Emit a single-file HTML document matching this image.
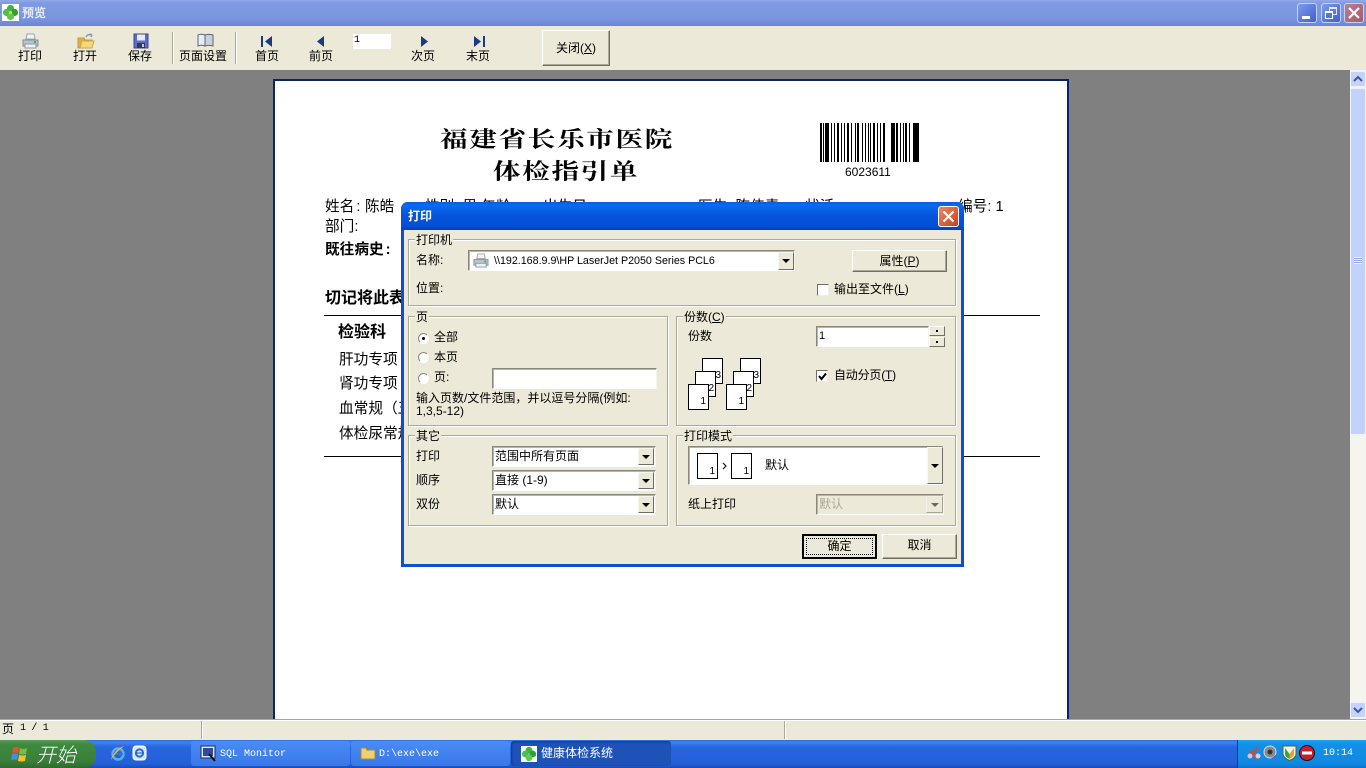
<!DOCTYPE html>
<html><head><meta charset="utf-8"><style>
html,body{margin:0;padding:0;width:1366px;height:768px;overflow:hidden;background:#808080}
*{box-sizing:border-box}
body{position:relative;font-family:"Liberation Sans","WenQuanYi Zen Hei","Noto Sans CJK SC",sans-serif;font-size:12px;color:#000}
.a{position:absolute}
.t{position:absolute;white-space:nowrap;line-height:14px;font-size:12px}
.d{font-size:14.67px;line-height:18px}
.b{font-weight:bold}
.g{position:absolute;border:1px solid #aca899;box-shadow:inset 1px 1px 0 #fff,1px 1px 0 #fff}
.lab{position:absolute;top:-7px;left:6px;background:#ece9d8;padding:0 1px;line-height:14px;white-space:nowrap}
.in{position:absolute;background:#fff;border:1px solid;border-color:#8a8778 #f4f3ee #fff #8a8778;box-shadow:inset 1px 1px 0 #b8b5a6}
.ar{position:absolute;background:#ece9d8;border:1px solid;border-color:#f8f7f2 #716f64 #716f64 #f8f7f2}
.ar:after{content:"";position:absolute;left:50%;top:50%;margin:-2px 0 0 -4px;border:4px solid transparent;border-top:4px solid #000;border-bottom:0}
.btn{position:absolute;background:#ece9d8;border:1px solid;border-color:#fff #716f64 #716f64 #fff;box-shadow:inset -1px -1px 0 #aca899;text-align:center;white-space:nowrap}
.rd{position:absolute;width:11px;height:11px;border-radius:50%;background:#fff;border:1px solid;border-color:#8a8778 #fff #fff #8a8778}
.ck{position:absolute;width:12px;height:12px;background:#fff;border:1px solid;border-color:#716f64 #eee #eee #716f64}
.pg{position:absolute;width:21px;height:26px;background:#fff;border:1px solid #000;font-size:10px;line-height:10px;text-align:right;padding:12px 1px 0 0}
.wb{position:absolute;top:3px;width:20px;height:20px;border-radius:3px;border:1px solid #c5d2f5;background:linear-gradient(135deg,#7f9cea,#3f5fd0)}
.tk{position:absolute;top:741px;height:25px;border-radius:3px;background:linear-gradient(#4a8bf5,#3a78ea);color:#fff;line-height:25px;white-space:nowrap}
.ttl{position:absolute;white-space:nowrap;font-size:22px;line-height:28px;font-family:'Noto Serif CJK SC',serif;letter-spacing:1.4px;font-weight:700;transform:scaleX(1.25);transform-origin:0 0}
</style></head><body>

<!-- title bar -->
<div class="a" style="left:0;top:0;width:1366px;height:26px;background:linear-gradient(#92aae8 0,#7e9ae2 12%,#7a96e0 70%,#6c84d6 100%)"></div>
<svg class="a" style="left:2px;top:4px" width="17" height="17" viewBox="0 0 17 17"><rect width="17" height="17" fill="#fff"/><circle cx="8.5" cy="4.5" r="3.6" fill="#3fb53f"/><circle cx="4.5" cy="8.5" r="3.6" fill="#4cc04c"/><circle cx="12.5" cy="8.5" r="3.6" fill="#2f9e3a"/><circle cx="8.5" cy="12.5" r="3.6" fill="#5fc94f"/><circle cx="8.5" cy="8.5" r="1.6" fill="#e8d040"/></svg>
<div class="t" style="left:22px;top:6px;color:#e6ecfa;font-weight:bold">预览</div>
<div class="wb" style="left:1297px"><div class="a" style="left:4px;top:12px;width:8px;height:3px;background:#fff"></div></div>
<div class="wb" style="left:1321px"><div class="a" style="left:7px;top:3px;width:8px;height:8px;border:1px solid #dfe6fa;border-top-width:2px"></div><div class="a" style="left:3px;top:7px;width:8px;height:8px;border:1px solid #fff;border-top-width:2px;background:#5474da"></div></div>
<div class="wb" style="left:1344px;background:linear-gradient(135deg,#b88090,#a55a6c)"><svg class="a" style="left:2px;top:2px" width="14" height="14"><path d="M2 2L12 12M12 2L2 12" stroke="#fff" stroke-width="2.2"/></svg></div>

<!-- toolbar -->
<div class="a" style="left:0;top:26px;width:1366px;height:44px;background:#ece9d8"></div>
<svg class="a" style="left:22px;top:33px" width="17" height="16" viewBox="0 0 17 16"><path d="M5 1h7l1 5H4z" fill="#f4f4f4" stroke="#9aa6b2"/><path d="M1 7h15v6H1z" fill="#b8c4d0" stroke="#7f8e9e"/><path d="M3 11h11v4H3z" fill="#eef1f4" stroke="#8b97a4"/><rect x="12" y="8" width="2" height="2" fill="#3db03d"/></svg>
<svg class="a" style="left:77px;top:33px" width="18" height="16" viewBox="0 0 18 16"><path d="M1 5h6l1 2h7v8H1z" fill="#e0b040" stroke="#c09a40"/><path d="M3 15L5 8h12l-2 7z" fill="#f6d878" stroke="#c8a850"/><path d="M9 4C10 2 12 1 15 2M15 2l-2-1M15 2l-1 2" fill="none" stroke="#7f93a8" stroke-width="1.3"/></svg>
<svg class="a" style="left:133px;top:33px" width="16" height="16" viewBox="0 0 16 16"><path d="M1 1h14v14H1z" fill="#5a6ec8" stroke="#3a4690"/><rect x="4" y="1.5" width="8" height="6" fill="#e8ecf6"/><rect x="4" y="10" width="8" height="5" fill="#30385c"/><rect x="9" y="11" width="2" height="3" fill="#c0c8d8"/></svg>
<svg class="a" style="left:197px;top:33px" width="17" height="15" viewBox="0 0 17 15"><path d="M1 2c2-1 4-1 7 0v11c-3-1-5-1-7 0z" fill="#e8edf2" stroke="#5a6672"/><path d="M8 2c3-1 5-1 8 0v11c-3-1-5-1-8 0z" fill="#c8d2dc" stroke="#5a6672"/></svg>
<div class="a" style="left:172px;top:32px;width:2px;height:32px;background:linear-gradient(90deg,#aca899 50%,#fff 50%)"></div>
<div class="a" style="left:235px;top:32px;width:2px;height:32px;background:linear-gradient(90deg,#aca899 50%,#fff 50%)"></div>
<svg class="a" style="left:261px;top:36px" width="12" height="11"><rect x="0" y="0" width="2" height="11" fill="#1f3a7a"/><path d="M11 0v11L4 5.5z" fill="#1f3a7a"/></svg>
<svg class="a" style="left:317px;top:36px" width="7" height="11"><path d="M7 0v11L0 5.5z" fill="#1f3a7a"/></svg>
<svg class="a" style="left:421px;top:36px" width="7" height="11"><path d="M0 0v11L7 5.5z" fill="#1f3a7a"/></svg>
<svg class="a" style="left:473px;top:36px" width="12" height="11"><rect x="10" y="0" width="2" height="11" fill="#1f3a7a"/><path d="M1 0v11L8 5.5z" fill="#1f3a7a"/></svg>
<div class="a" style="left:353px;top:34px;width:38px;height:15px;background:#fff"></div>
<div class="t" style="left:354px;top:34px;font-size:10px;font-family:'Liberation Mono',monospace">1</div>
<div class="t" style="left:18px;top:49px">打印</div>
<div class="t" style="left:73px;top:49px">打开</div>
<div class="t" style="left:128px;top:49px">保存</div>
<div class="t" style="left:179px;top:49px">页面设置</div>
<div class="t" style="left:255px;top:49px">首页</div>
<div class="t" style="left:309px;top:49px">前页</div>
<div class="t" style="left:411px;top:49px">次页</div>
<div class="t" style="left:466px;top:49px">末页</div>
<div class="btn" style="left:542px;top:30px;width:68px;height:36px;line-height:34px">关闭(<u>X</u>)</div>

<!-- scrollbar -->
<div class="a" style="left:1350px;top:70px;width:16px;height:649px;background:#f5f4ef"></div>
<div class="a" style="left:1350px;top:71px;width:16px;height:16px;background:#c4d3fb;border:1px solid #eef2fd;border-radius:2px"></div>
<svg class="a" style="left:1353px;top:75px" width="10" height="8"><path d="M1 6L5 2l4 4" fill="none" stroke="#3a5a96" stroke-width="2"/></svg>
<div class="a" style="left:1350px;top:88px;width:16px;height:347px;background:#c2d2fb;border:1px solid #eef2fd;border-radius:2px"></div>
<div class="a" style="left:1354px;top:257px;width:8px;height:7px;background:repeating-linear-gradient(#eef2fd 0 1px,#8fa8e0 1px 2px)"></div>
<div class="a" style="left:1350px;top:702px;width:16px;height:16px;background:#c4d3fb;border:1px solid #eef2fd;border-radius:2px"></div>
<svg class="a" style="left:1353px;top:706px" width="10" height="8"><path d="M1 2l4 4 4-4" fill="none" stroke="#3a5a96" stroke-width="2"/></svg>

<!-- document page -->
<div class="a" style="left:273px;top:79px;width:796px;height:641px;background:#fff;border:2px solid #0a246a;border-bottom:0"></div>
<div class="ttl" style="left:440px;top:125px">福建省长乐市医院</div>
<div class="ttl" style="left:493px;top:157px">体检指引单</div>
<svg class="a" style="left:820px;top:123px" width="100" height="39" shape-rendering="crispEdges"><path fill="#000" d="M0 0h2v39H0zM3 0h1v39H3zM5 0h4v39H5zM11 0h1v39h-1zM14 0h1v39h-1zM17 0h2v39h-2zM21 0h1v39h-1zM24 0h1v39h-1zM27 0h2v39h-2zM31 0h1v39h-1zM35 0h1v39h-1zM37 0h2v39h-2zM42 0h1v39h-1zM45 0h1v39h-1zM48 0h1v39h-1zM50 0h1v39h-1zM53 0h2v39h-2zM57 0h1v39h-1zM60 0h1v39h-1zM63 0h2v39h-2zM71 0h4v39h-4zM76 0h2v39h-2zM80 0h1v39h-1zM83 0h1v39h-1zM85 0h2v39h-2zM89 0h1v39h-1zM93 0h6v39h-6z"/></svg>
<div class="t" style="left:845px;top:165px;font-size:12px">6023611</div>

<div class="t d" style="left:325px;top:198px">姓名<span style="margin:0 3px 0 2px">:</span></div>
<div class="t d" style="left:365px;top:198px">陈皓</div>
<div class="t d" style="left:425px;top:198px">性别: 男 年龄:</div>
<div class="t d" style="left:543px;top:198px">出生日</div>
<div class="t d" style="left:698px;top:198px">医生: 陈伟青</div>
<div class="t d" style="left:805px;top:198px">状活</div>
<div class="t d" style="left:958px;top:198px">编号: 1</div>
<div class="t d" style="left:325px;top:218px">部门:</div>
<div class="t d b" style="left:325px;top:241px">既往病史<span style="margin-left:2px">:</span></div>
<div class="t d b" style="left:325px;top:290px;font-size:16px">切记将此表</div>
<div class="a" style="left:324px;top:315px;width:716px;height:1px;background:#000"></div>
<div class="t d b" style="left:338px;top:324px;font-size:16px">检验科</div>
<div class="t d" style="left:339px;top:351px">肝功专项</div>
<div class="t d" style="left:339px;top:375px">肾功专项</div>
<div class="t d" style="left:339px;top:400px">血常规（五</div>
<div class="t d" style="left:339px;top:425px">体检尿常规</div>
<div class="a" style="left:324px;top:456px;width:716px;height:1px;background:#000"></div>

<!-- dialog -->
<div class="a" style="left:401px;top:202px;width:563px;height:365px;background:#ece9d8;border:3px solid #0a4fd8;border-top:0;border-radius:7px 7px 0 0"></div>
<div class="a" style="left:401px;top:202px;width:563px;height:28px;border-radius:7px 7px 0 0;background:linear-gradient(#0a5ce0 0,#0a6af0 12%,#0654dc 50%,#0450d8 85%,#0340b8 100%)"></div>
<div class="t b" style="left:408px;top:209px;color:#fff;font-size:12px">打印</div>
<div class="a" style="left:938px;top:206px;width:21px;height:21px;border-radius:3px;border:1px solid #fff;background:linear-gradient(135deg,#e88a6a,#c8401c)"><svg class="a" style="left:3px;top:3px" width="13" height="13"><path d="M1.5 1.5L11.5 11.5M11.5 1.5L1.5 11.5" stroke="#fff" stroke-width="2.2"/></svg></div>

<div class="g" style="left:408px;top:239px;width:548px;height:67px"><div class="lab">打印机</div></div>
<div class="t" style="left:416px;top:253px">名称:</div>
<div class="in" style="left:468px;top:250px;width:327px;height:21px"></div>
<svg class="a" style="left:473px;top:253px" width="16" height="15" viewBox="0 0 17 16"><path d="M5 1h7l1 5H4z" fill="#f4f4f4" stroke="#9aa6b2"/><path d="M1 7h15v6H1z" fill="#b8c4d0" stroke="#7f8e9e"/><path d="M3 11h11v4H3z" fill="#eef1f4" stroke="#8b97a4"/><rect x="12" y="8" width="2" height="2" fill="#3db03d"/></svg>
<div class="t" style="left:494px;top:254px;font-size:10.7px">\\192.168.9.9\HP LaserJet P2050 Series PCL6</div>
<div class="ar" style="left:778px;top:252px;width:16px;height:18px"></div>
<div class="btn" style="left:852px;top:250px;width:95px;height:22px;line-height:20px">属性(<u>P</u>)</div>
<div class="t" style="left:416px;top:281px">位置:</div>
<div class="ck" style="left:817px;top:284px"></div>
<div class="t" style="left:834px;top:282px">输出至文件(<u>L</u>)</div>

<div class="g" style="left:408px;top:316px;width:260px;height:110px"><div class="lab">页</div></div>
<div class="rd" style="left:418px;top:333px"><div class="a" style="left:3px;top:3px;width:3px;height:3px;background:#000;border-radius:50%"></div></div>
<div class="t" style="left:434px;top:330px">全部</div>
<div class="rd" style="left:418px;top:352px"></div>
<div class="t" style="left:434px;top:350px">本页</div>
<div class="rd" style="left:418px;top:373px"></div>
<div class="t" style="left:434px;top:370px">页:</div>
<div class="in" style="left:492px;top:368px;width:165px;height:21px"></div>
<div class="t" style="left:416px;top:391px">输入页数/文件范围，并以逗号分隔(例如:</div>
<div class="t" style="left:416px;top:404px">1,3,5-12)</div>

<div class="g" style="left:676px;top:316px;width:280px;height:110px"><div class="lab">份数(<u>C</u>)</div></div>
<div class="t" style="left:688px;top:329px">份数</div>
<div class="in" style="left:816px;top:326px;width:113px;height:21px"></div>
<div class="t" style="left:819px;top:329px;font-size:11px">1</div>
<div class="a" style="left:929px;top:326px;width:16px;height:10px;background:#ece9d8;border:1px solid;border-color:#fff #716f64 #716f64 #fff"></div>
<div class="a" style="left:929px;top:337px;width:16px;height:10px;background:#ece9d8;border:1px solid;border-color:#fff #716f64 #716f64 #fff"></div>
<div class="a" style="left:936px;top:330px;width:2px;height:2px;background:#000"></div>
<div class="a" style="left:936px;top:341px;width:2px;height:2px;background:#000"></div>
<div class="pg" style="left:702px;top:358px">3</div>
<div class="pg" style="left:695px;top:371px">2</div>
<div class="pg" style="left:688px;top:384px;padding-right:2px">1</div>
<div class="pg" style="left:740px;top:358px">3</div>
<div class="pg" style="left:733px;top:371px">2</div>
<div class="pg" style="left:726px;top:384px;padding-right:2px">1</div>
<div class="ck" style="left:816px;top:370px"><svg class="a" style="left:1px;top:1px" width="9" height="9"><path d="M1 4l2.5 3L8 1.5" fill="none" stroke="#000" stroke-width="2"/></svg></div>
<div class="t" style="left:834px;top:368px;letter-spacing:-.2px">自动分页(<u>T</u>)</div>

<div class="g" style="left:408px;top:435px;width:260px;height:91px"><div class="lab">其它</div></div>
<div class="t" style="left:416px;top:449px">打印</div>
<div class="t" style="left:416px;top:473px">顺序</div>
<div class="t" style="left:416px;top:497px">双份</div>
<div class="in" style="left:492px;top:446px;width:164px;height:21px"></div>
<div class="ar" style="left:638px;top:448px;width:16px;height:17px"></div>
<div class="t" style="left:495px;top:449px">范围中所有页面</div>
<div class="in" style="left:492px;top:470px;width:164px;height:21px"></div>
<div class="ar" style="left:638px;top:472px;width:16px;height:17px"></div>
<div class="t" style="left:495px;top:473px">直接 (1-9)</div>
<div class="in" style="left:492px;top:494px;width:164px;height:21px"></div>
<div class="ar" style="left:638px;top:496px;width:16px;height:17px"></div>
<div class="t" style="left:495px;top:497px">默认</div>

<div class="g" style="left:676px;top:435px;width:280px;height:91px"><div class="lab">打印模式</div></div>
<div class="in" style="left:688px;top:446px;width:255px;height:39px"></div>
<div class="ar" style="left:927px;top:447px;width:16px;height:37px"></div>
<div class="pg" style="left:697px;top:453px;padding:13px 2px 0 0">1</div>
<svg class="a" style="left:722px;top:462px" width="6" height="8"><path d="M1 1l3 3-3 3" fill="none" stroke="#000"/></svg>
<div class="pg" style="left:731px;top:453px;padding:13px 2px 0 0">1</div>
<div class="t" style="left:765px;top:458px">默认</div>
<div class="t" style="left:688px;top:497px">纸上打印</div>
<div class="in" style="left:816px;top:494px;width:128px;height:21px;background:#ece9d8"></div>
<div class="t" style="left:819px;top:497px;color:#aca899">默认</div>
<div class="ar" style="left:926px;top:496px;width:17px;height:17px;opacity:.55"></div>

<div class="btn" style="left:802px;top:534px;width:75px;height:25px;line-height:20px;border:2px solid #000;box-shadow:none"><div class="a" style="left:2px;top:2px;right:2px;bottom:2px;border:1px dotted #000"></div>确定</div>
<div class="btn" style="left:882px;top:534px;width:75px;height:25px;line-height:21px">取消</div>

<!-- status bar -->
<div class="a" style="left:0;top:719px;width:1366px;height:21px;background:#ece9d8;border-top:1px solid #aca899"></div>
<div class="a" style="left:0;top:720px;width:1366px;height:1px;background:#fff"></div>
<div class="t" style="left:2px;top:722px">页</div>
<div class="t" style="left:20px;top:722px;font-family:'Liberation Mono',monospace;font-size:10px;letter-spacing:-.3px">1 / 1</div>
<div class="a" style="left:201px;top:721px;width:2px;height:18px;background:linear-gradient(90deg,#aca899 50%,#fff 50%)"></div>
<div class="a" style="left:784px;top:721px;width:2px;height:18px;background:linear-gradient(90deg,#aca899 50%,#fff 50%)"></div>

<!-- taskbar -->
<div class="a" style="left:0;top:740px;width:1366px;height:28px;background:linear-gradient(#2a6de0 0,#3f83ee 8%,#2766e0 25%,#2460d8 85%,#1a4cb8 100%)"></div>
<div class="a" style="left:0;top:740px;width:96px;height:28px;border-radius:0 12px 12px 0;background:linear-gradient(#5b9a5b 0,#3f8a3f 15%,#3a7f3a 75%,#2d6a2d 100%)"></div>
<svg class="a" style="left:11px;top:745px" width="18" height="18" viewBox="0 0 18 18"><path d="M2 3q3-2 6 0l-1 5q-3-1-6 0z" fill="#e2552b"/><path d="M9 3q3 2 7 0l-1 6q-4 1-7 0z" fill="#7cbb3c"/><path d="M1 9q3-1 6 0l-1 6q-3-1-6 0z" fill="#4a8ce8"/><path d="M8 10q4 1 7 0l-1 6q-4 1-7 0z" fill="#f4c030"/></svg>
<div class="t" style="left:36px;top:742px;color:#fff;font-size:20px;line-height:24px;font-style:italic;font-family:'Noto Sans CJK SC',sans-serif;font-weight:300">开始</div>
<svg class="a" style="left:109px;top:745px" width="17" height="17" viewBox="0 0 17 17"><circle cx="9" cy="9" r="5.5" fill="none" stroke="#5ab0ee" stroke-width="2.4"/><path d="M4 9h10" stroke="#2a80d8" stroke-width="1.6"/><path d="M2 15C3 9 9 3 15 1c-3 3-10 8-13 14z" fill="#e8b840"/></svg>
<svg class="a" style="left:132px;top:745px" width="15" height="16" viewBox="0 0 15 16"><rect x="1" y="1" width="13" height="14" rx="3" fill="#d8e8fa" stroke="#fff"/><circle cx="7.5" cy="8" r="3.6" fill="none" stroke="#2a6ac8" stroke-width="2"/><path d="M4 8h7" stroke="#2a6ac8" stroke-width="1.2"/></svg>

<div class="tk" style="left:191px;width:159px"><svg class="a" style="left:9px;top:4px" width="17" height="17" viewBox="0 0 17 17"><rect x="1" y="1" width="14" height="12" fill="#dfe6f2" stroke="#1c2a58"/><rect x="3" y="3" width="10" height="8" fill="#3048a0"/><path d="M9 9l6 7" stroke="#111" stroke-width="2"/></svg><span class="a" style="left:29px;top:1px;font-family:'Liberation Mono',monospace;font-size:10px">SQL Monitor</span></div>
<div class="tk" style="left:351px;width:159px"><svg class="a" style="left:9px;top:5px" width="16" height="14" viewBox="0 0 16 14"><path d="M1 2h5l1 2h8v9H1z" fill="#f0d070" stroke="#a88a30"/></svg><span class="a" style="left:28px;top:1px;font-family:'Liberation Mono',monospace;font-size:10px">D:\exe\exe</span></div>
<div class="tk" style="left:511px;width:160px;background:#1e52b7;box-shadow:inset 1px 1px 2px #123a90"><svg class="a" style="left:10px;top:5px" width="16" height="16" viewBox="0 0 17 17"><rect width="17" height="17" fill="#fff"/><circle cx="8.5" cy="4.5" r="3.6" fill="#3fb53f"/><circle cx="4.5" cy="8.5" r="3.6" fill="#4cc04c"/><circle cx="12.5" cy="8.5" r="3.6" fill="#2f9e3a"/><circle cx="8.5" cy="12.5" r="3.6" fill="#5fc94f"/></svg><span class="a" style="left:30px">健康体检系统</span></div>

<div class="a" style="left:1237px;top:740px;width:129px;height:28px;background:linear-gradient(#18a0f0 0,#1490e8 15%,#1088e0 85%,#0c74cc 100%);border-left:1px solid #0a3c98"></div>
<svg class="a" style="left:1246px;top:745px" width="16" height="16"><path d="M2 11l10-8M4 6l8 8" stroke="#d04a3a" stroke-width="2.4"/><circle cx="4" cy="11" r="2.5" fill="#c8c8d8"/><circle cx="12" cy="11" r="2.5" fill="#d0d4e8"/></svg>
<svg class="a" style="left:1263px;top:745px" width="16" height="16"><circle cx="7" cy="7" r="6" fill="#8a8a8a" stroke="#d8d8d8"/><circle cx="7" cy="7" r="2.5" fill="#333"/><path d="M8 15l6-5" stroke="#4a6ad8" stroke-width="2"/></svg>
<svg class="a" style="left:1282px;top:745px" width="15" height="16"><path d="M1 1h13v8c0 3-3 5-6.5 6.5C4 14 1 12 1 9z" fill="#f4f4e8" stroke="#4a6a2a"/><path d="M3 3l4.500 6V14C4 12 3 11 3 9z" fill="#3aa050"/><path d="M12 3l-4.500 6V14c3-2 4.500-3 4.500-5z" fill="#e8a020"/></svg>
<svg class="a" style="left:1299px;top:745px" width="16" height="16"><circle cx="8" cy="8" r="7.500" fill="#c81e2e" stroke="#111"/><rect x="3" y="6.500" width="10" height="3" fill="#fff"/></svg>
<div class="t" style="left:1323px;top:747px;color:#fff;font-family:'Liberation Mono',monospace;font-size:10px">10:14</div>
</body></html>
